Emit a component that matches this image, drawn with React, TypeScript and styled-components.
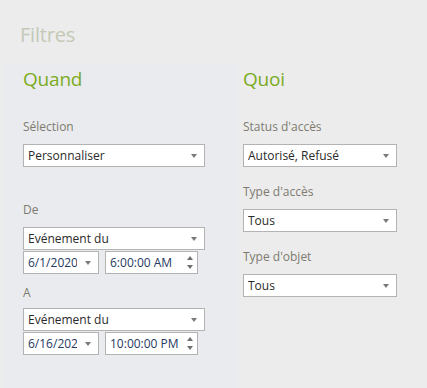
import React from 'react';
import styled, { createGlobalStyle } from 'styled-components';

const GlobalStyle = createGlobalStyle`
  html, body {
    margin: 0;
    padding: 0;
    background: #ececec;
  }
  body {
    font-family: 'Open Sans', 'Liberation Sans', sans-serif;
  }
`;

const StyledPage = styled.div`
  width: 427px;
  height: 388px;
  overflow: hidden;
  background: #ececec;
`;

const StyledTitle = styled.h1`
  margin: 0;
  padding: 22px 0 0 20px;
  height: 63px;
  box-sizing: border-box;
  font-size: 20px;
  line-height: 26px;
  font-weight: 400;
  color: #c3c9b6;
  letter-spacing: -0.2px;
`;

const StyledColumns = styled.div`
  display: flex;
  padding-left: 3px;
`;

const StyledColumn = styled.section<{ $tinted?: boolean }>`
  width: ${(p) => (p.$tinted ? '235px' : 'auto')};
  flex: ${(p) => (p.$tinted ? 'none' : '1')};
  height: 325px;
  box-sizing: border-box;
  padding: 4px 0 0 ${(p) => (p.$tinted ? '20px' : '5px')};
  background: ${(p) => (p.$tinted ? '#eaebee' : 'transparent')};
`;

const StyledHeading = styled.h2`
  margin: 0 0 28px;
  font-size: 19px;
  line-height: 24px;
  font-weight: 400;
  color: #7bab1f;
  letter-spacing: -0.2px;
`;

const StyledLabel = styled.div<{ $gap?: number; $after?: number }>`
  font-size: 12px;
  line-height: 16px;
  color: #7d7b70;
  margin-top: ${(p) => p.$gap ?? 0}px;
  margin-bottom: ${(p) => p.$after ?? 9}px;
`;

const StyledBox = styled.div<{ $width: number; $room?: number }>`
  position: relative;
  width: ${(p) => p.$width}px;
  height: 23px;
  box-sizing: border-box;
  border: 1px solid #b3b3b3;
  background: #fff;
  display: flex;
  align-items: center;
  padding: 0 ${(p) => p.$room ?? 14}px 0 4px;
  font-size: 12px;
  color: #2a2a2a;
  white-space: nowrap;
  overflow: hidden;
`;

const StyledValue = styled.span<{ $navy?: boolean }>`
  color: ${(p) => (p.$navy ? '#263a62' : '#2a2a2a')};
  overflow: hidden;
`;

const StyledCaret = styled.span`
  position: absolute;
  right: 7px;
  top: 9px;
  width: 0;
  height: 0;
  border-left: 3.5px solid transparent;
  border-right: 3.5px solid transparent;
  border-top: 4px solid #7a7a7a;
`;

const StyledSpin = styled.span`
  position: absolute;
  right: 4px;
  top: 4px;
  bottom: 4px;
  display: flex;
  flex-direction: column;
  justify-content: space-between;
`;

const StyledArrow = styled.span<{ $up?: boolean }>`
  width: 0;
  height: 0;
  border-left: 3.5px solid transparent;
  border-right: 3.5px solid transparent;
  ${(p) =>
    p.$up ? 'border-bottom: 4px solid #6f6f6f;' : 'border-top: 4px solid #6f6f6f;'}
`;

const StyledRow = styled.div`
  display: flex;
  gap: 6px;
  margin-top: 1px;
`;

const Select = ({
  value,
  width,
  navy,
  room,
}: {
  value: string;
  width: number;
  navy?: boolean;
  room?: number;
}) => (
  <StyledBox $width={width} $room={room}>
    <StyledValue $navy={navy}>{value}</StyledValue>
    <StyledCaret />
  </StyledBox>
);

const TimeInput = ({ value }: { value: string }) => (
  <StyledBox $width={93}>
    <StyledValue $navy>{value}</StyledValue>
    <StyledSpin>
      <StyledArrow $up />
      <StyledArrow />
    </StyledSpin>
  </StyledBox>
);

const App = () => {
  return (
    <StyledPage>
      <GlobalStyle />
      <StyledTitle>Filtres</StyledTitle>
      <StyledColumns>
        <StyledColumn $tinted>
          <StyledHeading>Quand</StyledHeading>
          <StyledLabel>Sélection</StyledLabel>
          <Select value="Personnaliser" width={182} />
          <StyledLabel $gap={35}>De</StyledLabel>
          <Select value="Evénement du" width={182} />
          <StyledRow>
            <Select value="6/1/2020" width={76} navy room={21} />
            <TimeInput value="6:00:00 AM" />
          </StyledRow>
          <StyledLabel $gap={11} $after={7}>A</StyledLabel>
          <Select value="Evénement du" width={182} />
          <StyledRow>
            <Select value="6/16/2020" width={76} navy room={21} />
            <TimeInput value="10:00:00 PM" />
          </StyledRow>
        </StyledColumn>
        <StyledColumn>
          <StyledHeading>Quoi</StyledHeading>
          <StyledLabel>Status d'accès</StyledLabel>
          <Select value="Autorisé, Refusé" width={154} />
          <StyledLabel $gap={17}>Type d'accès</StyledLabel>
          <Select value="Tous" width={154} />
          <StyledLabel $gap={17}>Type d'objet</StyledLabel>
          <Select value="Tous" width={154} />
        </StyledColumn>
      </StyledColumns>
    </StyledPage>
  );
};

export default App;
